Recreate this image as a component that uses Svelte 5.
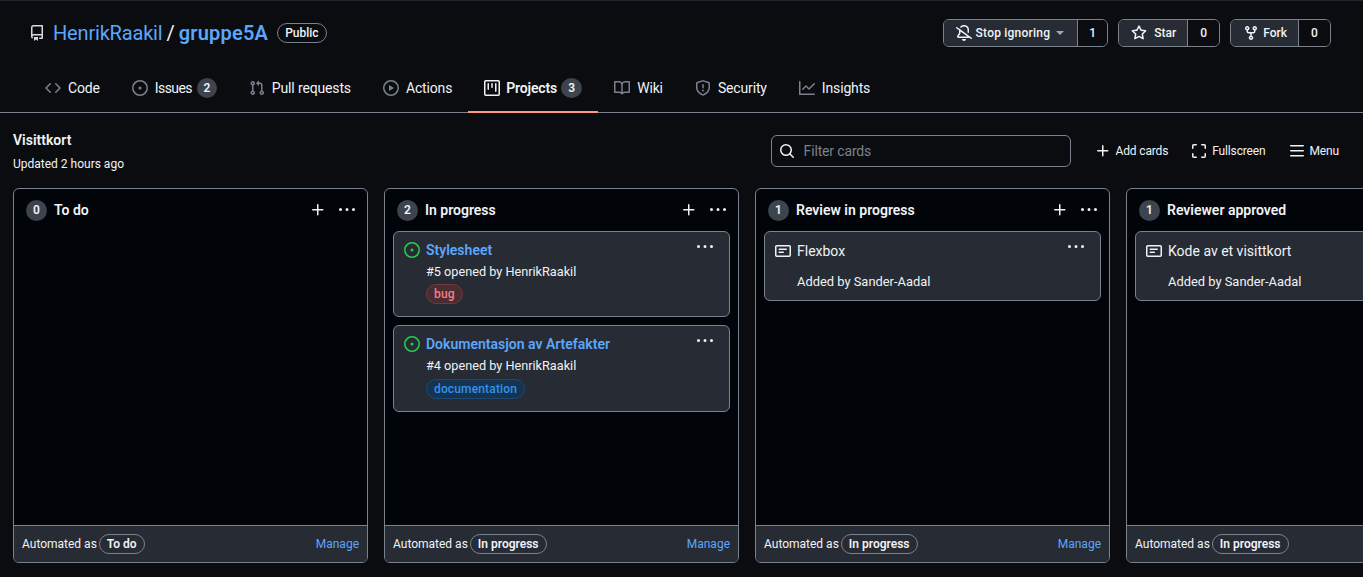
<script>
  const icons = {
    repo: 'M2 2.5A2.5 2.5 0 0 1 4.5 0h8.75a.75.75 0 0 1 .75.75v12.5a.75.75 0 0 1-.75.75h-2.5a.75.75 0 0 1 0-1.5h1.75v-2h-8a1 1 0 0 0-.714 1.7.75.75 0 1 1-1.072 1.05A2.495 2.495 0 0 1 2 11.5Zm10.5-1h-8a1 1 0 0 0-1 1v6.708A2.486 2.486 0 0 1 4.5 9h8ZM5 12.25a.25.25 0 0 1 .25-.25h3.5a.25.25 0 0 1 .25.25v3.25a.25.25 0 0 1-.4.2l-1.45-1.087a.249.249 0 0 0-.3 0L5.4 15.7a.25.25 0 0 1-.4-.2Z',
    code: 'm11.28 3.22 4.25 4.25a.75.75 0 0 1 0 1.06l-4.25 4.25a.749.749 0 0 1-1.275-.326.749.749 0 0 1 .215-.734L13.94 8l-3.72-3.72a.749.749 0 0 1 .326-1.275.749.749 0 0 1 .734.215Zm-6.56 0a.751.751 0 0 1 1.042.018.751.751 0 0 1 .018 1.042L2.06 8l3.72 3.72a.749.749 0 0 1-.326 1.275.749.749 0 0 1-.734-.215L.47 8.53a.75.75 0 0 1 0-1.06Z',
    issue: 'M8 9.5a1.5 1.5 0 1 0 0-3 1.5 1.5 0 0 0 0 3ZM8 0a8 8 0 1 1 0 16A8 8 0 0 1 8 0ZM1.5 8a6.5 6.5 0 1 0 13 0 6.5 6.5 0 0 0-13 0Z',
    pull: 'M1.5 3.25a2.25 2.25 0 1 1 3 2.122v5.256a2.251 2.251 0 1 1-1.5 0V5.372A2.25 2.25 0 0 1 1.5 3.25Zm5.677-.177L9.573.677A.25.25 0 0 1 10 .854V2.5h1A2.5 2.5 0 0 1 13.5 5v5.628a2.251 2.251 0 1 1-1.5 0V5a1 1 0 0 0-1-1h-1v1.646a.25.25 0 0 1-.427.177L7.177 3.427a.25.25 0 0 1 0-.354ZM3.75 2.5a.75.75 0 1 0 0 1.5.75.75 0 0 0 0-1.5Zm0 9.5a.75.75 0 1 0 0 1.5.75.75 0 0 0 0-1.5Zm8.25.75a.75.75 0 1 0 1.5 0 .75.75 0 0 0-1.5 0Z',
    play: 'M8 0a8 8 0 1 1 0 16A8 8 0 0 1 8 0ZM1.5 8a6.5 6.5 0 1 0 13 0 6.5 6.5 0 0 0-13 0Zm4.879-2.773 4.264 2.559a.25.25 0 0 1 0 .428l-4.264 2.559A.25.25 0 0 1 6 10.559V5.442a.25.25 0 0 1 .379-.215Z',
    project: 'M1.75 0h12.5C15.216 0 16 .784 16 1.75v12.5A1.75 1.75 0 0 1 14.25 16H1.75A1.75 1.75 0 0 1 0 14.25V1.75C0 .784.784 0 1.75 0ZM1.5 1.75v12.5c0 .138.112.25.25.25h12.5a.25.25 0 0 0 .25-.25V1.75a.25.25 0 0 0-.25-.25H1.75a.25.25 0 0 0-.25.25ZM11.75 3a.75.75 0 0 1 .75.75v7.5a.75.75 0 0 1-1.5 0v-7.5a.75.75 0 0 1 .75-.75Zm-8.25.75a.75.75 0 0 1 1.5 0v5.5a.75.75 0 0 1-1.5 0ZM8 3a.75.75 0 0 1 .75.75v3.5a.75.75 0 0 1-1.5 0v-3.5A.75.75 0 0 1 8 3Z',
    book: 'M0 1.75A.75.75 0 0 1 .75 1h4.253c1.227 0 2.317.59 3 1.501A3.743 3.743 0 0 1 11.006 1h4.245a.75.75 0 0 1 .75.75v10.5a.75.75 0 0 1-.75.75h-4.507a2.25 2.25 0 0 0-1.591.659l-.622.621a.75.75 0 0 1-1.06 0l-.622-.621A2.25 2.25 0 0 0 5.258 13H.75a.75.75 0 0 1-.75-.75Zm7.251 10.324.004-5.073-.002-2.253A2.25 2.25 0 0 0 5.003 2.5H1.5v9h3.757a3.75 3.75 0 0 1 1.994.574ZM8.755 4.75l-.004 7.322a3.752 3.752 0 0 1 1.992-.572H14.5v-9h-3.495a2.25 2.25 0 0 0-2.25 2.25Z',
    shield: 'M7.467.133a1.748 1.748 0 0 1 1.066 0l5.25 1.68A1.75 1.75 0 0 1 15 3.48V7c0 1.566-.32 3.182-1.303 4.682-.983 1.498-2.585 2.813-5.032 3.855a1.697 1.697 0 0 1-1.33 0c-2.447-1.042-4.049-2.357-5.032-3.855C1.32 10.182 1 8.566 1 7V3.48a1.75 1.75 0 0 1 1.217-1.667Zm.61 1.429a.25.25 0 0 0-.153 0l-5.25 1.68a.25.25 0 0 0-.174.238V7c0 1.358.275 2.666 1.057 3.86.784 1.194 2.121 2.34 4.366 3.297a.196.196 0 0 0 .154 0c2.245-.956 3.582-2.104 4.366-3.298C13.225 9.666 13.5 8.36 13.5 7V3.48a.251.251 0 0 0-.174-.237l-5.25-1.68ZM8.75 4.75v3a.75.75 0 0 1-1.5 0v-3a.75.75 0 0 1 1.5 0ZM9 10.5a1 1 0 1 1-2 0 1 1 0 0 1 2 0Z',
    graph: 'M1.5 1.75V13.5h13.75a.75.75 0 0 1 0 1.5H.75a.75.75 0 0 1-.75-.75V1.75a.75.75 0 0 1 1.5 0Zm14.28 2.53-5.25 5.25a.75.75 0 0 1-1.06 0L7 7.06 4.28 9.78a.751.751 0 0 1-1.042-.018.751.751 0 0 1-.018-1.042l3.25-3.25a.75.75 0 0 1 1.06 0L10 7.94l4.72-4.72a.751.751 0 0 1 1.042.018.751.751 0 0 1 .018 1.042Z',
    bellSlash: 'm4.182 4.31.016.011 10.104 7.316.013.01 1.375.996a.75.75 0 1 1-.88 1.214L13.626 13H2.518a1.516 1.516 0 0 1-1.263-2.36l1.703-2.554A.255.255 0 0 0 3 7.947V5.305L.31 3.357a.75.75 0 1 1 .88-1.214Zm7.373 7.19L4.5 6.391v1.556c0 .346-.102.683-.294.97l-1.703 2.556a.017.017 0 0 0-.003.01c0 .005.002.009.005.012l.006.004.007.001ZM8 1.5c-.997 0-1.895.416-2.534 1.086A.75.75 0 1 1 4.38 1.55 5 5 0 0 1 13 5v2.373a.75.75 0 0 1-1.5 0V5A3.5 3.5 0 0 0 8 1.5ZM8 16a2 2 0 0 1-1.985-1.75c-.017-.137.097-.25.235-.25h3.5c.138 0 .252.113.235.25A2 2 0 0 1 8 16Z',
    star: 'M8 .25a.75.75 0 0 1 .673.418l1.882 3.815 4.21.612a.75.75 0 0 1 .416 1.279l-3.046 2.97.719 4.192a.751.751 0 0 1-1.088.791L8 12.347l-3.766 1.98a.75.75 0 0 1-1.088-.79l.72-4.194L.818 6.374a.75.75 0 0 1 .416-1.28l4.21-.611L7.327.668A.75.75 0 0 1 8 .25Zm0 2.445L6.615 5.5a.75.75 0 0 1-.564.41l-3.097.45 2.24 2.184a.75.75 0 0 1 .216.664l-.528 3.084 2.769-1.456a.75.75 0 0 1 .698 0l2.77 1.456-.53-3.084a.75.75 0 0 1 .216-.664l2.24-2.183-3.096-.45a.75.75 0 0 1-.564-.41L8 2.694Z',
    fork: 'M5 5.372v.878c0 .414.336.75.75.75h4.5a.75.75 0 0 0 .75-.75v-.878a2.25 2.25 0 1 1 1.5 0v.878a2.25 2.25 0 0 1-2.25 2.25h-1.5v2.128a2.251 2.251 0 1 1-1.5 0V8.5h-1.5A2.25 2.25 0 0 1 3.5 6.25v-.878a2.25 2.25 0 1 1 1.5 0ZM5 3.25a.75.75 0 1 0-1.5 0 .75.75 0 0 0 1.5 0Zm6.75.75a.75.75 0 1 0 0-1.5.75.75 0 0 0 0 1.5Zm-3 8.75a.75.75 0 1 0-1.5 0 .75.75 0 0 0 1.5 0Z',
    search: 'M10.68 11.74a6 6 0 0 1-7.922-8.982 6 6 0 0 1 8.982 7.922l3.04 3.04a.749.749 0 0 1-.326 1.275.749.749 0 0 1-.734-.215ZM11.5 7a4.499 4.499 0 1 0-8.997 0A4.499 4.499 0 0 0 11.5 7Z',
    plus: 'M7.75 2a.75.75 0 0 1 .75.75V7h4.25a.75.75 0 0 1 0 1.5H8.5v4.25a.75.75 0 0 1-1.5 0V8.5H2.75a.75.75 0 0 1 0-1.5H7V2.75A.75.75 0 0 1 7.75 2Z',
    full: 'M1.75 10a.75.75 0 0 1 .75.75v2.5c0 .138.112.25.25.25h2.5a.75.75 0 0 1 0 1.5h-2.5A1.75 1.75 0 0 1 1 13.25v-2.5a.75.75 0 0 1 .75-.75Zm12.5 0a.75.75 0 0 1 .75.75v2.5A1.75 1.75 0 0 1 13.25 15h-2.5a.75.75 0 0 1 0-1.5h2.5a.25.25 0 0 0 .25-.25v-2.5a.75.75 0 0 1 .75-.75ZM2.75 2.5a.25.25 0 0 0-.25.25v2.5a.75.75 0 0 1-1.5 0v-2.5C1 1.784 1.784 1 2.75 1h2.5a.75.75 0 0 1 0 1.5ZM10 1.75a.75.75 0 0 1 .75-.75h2.5c.966 0 1.75.784 1.75 1.75v2.5a.75.75 0 0 1-1.5 0v-2.5a.25.25 0 0 0-.25-.25h-2.5a.75.75 0 0 1-.75-.75Z',
    bars: 'M1 2.75A.75.75 0 0 1 1.75 2h12.5a.75.75 0 0 1 0 1.5H1.75A.75.75 0 0 1 1 2.75Zm0 5A.75.75 0 0 1 1.75 7h12.5a.75.75 0 0 1 0 1.5H1.75A.75.75 0 0 1 1 7.75ZM1.75 12h12.5a.75.75 0 0 1 0 1.5H1.75a.75.75 0 0 1 0-1.5Z',
    kebab: 'M8 9a1.5 1.5 0 1 0 0-3 1.5 1.5 0 0 0 0 3ZM1.5 9a1.5 1.5 0 1 0 0-3 1.5 1.5 0 0 0 0 3Zm13 0a1.5 1.5 0 1 0 0-3 1.5 1.5 0 0 0 0 3Z',
    note: 'M0 3.75C0 2.784.784 2 1.75 2h12.5c.966 0 1.75.784 1.75 1.75v8.5A1.75 1.75 0 0 1 14.25 14H1.75A1.75 1.75 0 0 1 0 12.25Zm1.75-.25a.25.25 0 0 0-.25.25v8.5c0 .138.112.25.25.25h12.5a.25.25 0 0 0 .25-.25v-8.5a.25.25 0 0 0-.25-.25ZM3.5 6.25a.75.75 0 0 1 .75-.75h7a.75.75 0 0 1 0 1.5h-7a.75.75 0 0 1-.75-.75Zm.75 2.25h4a.75.75 0 0 1 0 1.5h-4a.75.75 0 0 1 0-1.5Z'
  };

  const tabs = [
    { label: 'Code', icon: 'code' },
    { label: 'Issues', icon: 'issue', count: 2, tight: true },
    { label: 'Pull requests', icon: 'pull' },
    { label: 'Actions', icon: 'play' },
    { label: 'Projects', icon: 'project', count: 3, active: true },
    { label: 'Wiki', icon: 'book' },
    { label: 'Security', icon: 'shield' },
    { label: 'Insights', icon: 'graph' }
  ];

  const columns = [
    { title: 'To do', automated: 'To do', cards: [] },
    {
      title: 'In progress',
      automated: 'In progress',
      cards: [
        { type: 'issue', title: 'Stylesheet', meta: '#5 opened by HenrikRaakil', label: 'bug', tone: 'red' },
        { type: 'issue', title: 'Dokumentasjon av Artefakter', meta: '#4 opened by HenrikRaakil', label: 'documentation', tone: 'blue' }
      ]
    },
    {
      title: 'Review in progress',
      automated: 'In progress',
      cards: [{ type: 'note', title: 'Flexbox', meta: 'Added by Sander-Aadal' }]
    },
    {
      title: 'Reviewer approved',
      automated: 'In progress',
      cards: [{ type: 'note', title: 'Kode av et visittkort', meta: 'Added by Sander-Aadal' }]
    }
  ];
</script>

{#snippet icon(name, size = 16)}
  <svg class="icon" width={size} height={size} viewBox="0 0 16 16" fill="currentColor" aria-hidden="true">
    <path d={icons[name]} />
  </svg>
{/snippet}

<div class="page">
  <header class="repo-head">
    <div class="repo-title">
      <span class="repo-icon">{@render icon('repo')}</span>
      <a href="#owner" class="owner">HenrikRaakil</a>
      <span class="slash">/</span>
      <a href="#repo" class="name">gruppe5A</a>
      <span class="visibility">Public</span>
    </div>
    <div class="repo-actions">
      <div class="btn-group watch">
        <button class="btn">{@render icon('bellSlash')}<span>Stop ignoring</span><i class="caret"></i></button>
        <span class="btn-count">1</span>
      </div>
      <div class="btn-group">
        <button class="btn">{@render icon('star')}<span class="wide">Star</span></button>
        <span class="btn-count">0</span>
      </div>
      <div class="btn-group">
        <button class="btn">{@render icon('fork')}<span>Fork</span></button>
        <span class="btn-count">0</span>
      </div>
    </div>
  </header>

  <nav class="tabs">
    {#each tabs as tab}
      <a href="#tab" class="tab" class:active={tab.active} class:tight={tab.tight}>
        {@render icon(tab.icon)}
        <span class="tab-label">{tab.label}</span>
        {#if tab.count}<span class="counter">{tab.count}</span>{/if}
      </a>
    {/each}
  </nav>

  <section class="project-bar">
    <div>
      <h1>Visittkort</h1>
      <p>Updated 2 hours ago</p>
    </div>
    <div class="project-tools">
      <label class="filter">
        {@render icon('search')}
        <input placeholder="Filter cards" />
      </label>
      <button class="tool">{@render icon('plus')}Add cards</button>
      <button class="tool">{@render icon('full')}Fullscreen</button>
      <button class="tool">{@render icon('bars')}Menu</button>
    </div>
  </section>

  <main class="board">
    {#each columns as column}
      <section class="column">
        <div class="column-head">
          <span class="counter">{column.cards.length}</span>
          <h2>{column.title}</h2>
          <span class="column-actions">
            {@render icon('plus')}
            {@render icon('kebab')}
          </span>
        </div>
        <div class="cards">
          {#each column.cards as card}
            <article class="card" class:note={card.type === 'note'}>
              <span class="card-menu">{@render icon('kebab')}</span>
              {#if card.type === 'issue'}
                <div class="card-title">
                  <span class="open">{@render icon('issue')}</span>
                  <a href="#issue">{card.title}</a>
                </div>
                <p class="meta">{card.meta}</p>
                <span class="label {card.tone}">{card.label}</span>
              {:else}
                <div class="note-title">
                  {@render icon('note')}
                  <span>{card.title}</span>
                </div>
                <p class="meta">{card.meta}</p>
              {/if}
            </article>
          {/each}
        </div>
        <footer class="column-foot">
          <span>Automated as</span>
          <span class="pill">{column.automated}</span>
          <a href="#manage">Manage</a>
        </footer>
      </section>
    {/each}
  </main>
</div>

<style>
  :global(body) {
    margin: 0;
    background: #0a0c10;
  }

  .page {
    height: 577px;
    overflow: hidden;
    box-sizing: border-box;
    border-top: 1px solid #21262d;
    background: #0a0c10;
    color: #f0f3f6;
    font-family: Roboto, "Liberation Sans", sans-serif;
    font-size: 14px;
  }

  a {
    text-decoration: none;
    color: #5ca6fb;
  }

  h1,
  h2,
  p {
    margin: 0;
  }

  button {
    font: inherit;
    color: inherit;
    background: none;
    border: 0;
    padding: 0;
  }

  .icon {
    display: block;
    flex: none;
  }

  .repo-head {
    display: flex;
    align-items: center;
    justify-content: space-between;
    height: 64px;
    padding: 0 32px 0 29px;
    box-sizing: border-box;
  }

  .repo-title {
    display: flex;
    align-items: center;
    font-size: 20px;
  }

  .repo-icon {
    color: #d5dae0;
    margin-right: 8px;
  }

  .owner {
    letter-spacing: -0.18px;
  }

  .slash {
    margin: 0 4px;
  }

  .name {
    font-weight: 600;
    letter-spacing: 0.2px;
  }

  .visibility {
    margin-left: 9px;
    padding: 0 7px;
    border: 1px solid #7a828e;
    border-radius: 10px;
    font-size: 12px;
    font-weight: 500;
    line-height: 18px;
  }

  .repo-actions {
    display: flex;
    gap: 10px;
  }

  .btn-group {
    display: flex;
    height: 28px;
    box-sizing: border-box;
    border: 1px solid #7a828e;
    border-radius: 6px;
    font-size: 12px;
    font-weight: 500;
    overflow: hidden;
  }

  .btn {
    display: flex;
    align-items: center;
    gap: 4px;
    padding: 0 11px 0 12px;
    background: #272b33;
  }

  .btn .wide {
    margin-left: 3px;
  }

  .watch .btn {
    padding-right: 13px;
    letter-spacing: 0.22px;
  }

  .caret {
    margin-left: 2px;
    border: 4px solid transparent;
    border-top-color: #9ea7b3;
    border-bottom: 0;
  }

  .btn-count {
    display: flex;
    align-items: center;
    justify-content: center;
    width: 31px;
    border-left: 1px solid #7a828e;
    background: #0a0c10;
  }

  .watch .btn-count {
    width: 29px;
  }

  .tabs {
    display: flex;
    height: 48px;
    padding: 0 0 2px 29px;
    box-sizing: border-box;
    border-bottom: 1px solid #7a828e;
    letter-spacing: -0.15px;
  }

  .tab {
    display: flex;
    align-items: center;
    gap: 7px;
    padding: 0 16px;
    color: #f0f3f6;
    position: relative;
  }

  .tab.tight .tab-label {
    letter-spacing: -0.6px;
  }

  .tab .counter {
    margin-left: -2px;
    padding: 0;
    letter-spacing: 0;
  }

  .tab .icon {
    color: #7a828e;
  }

  .tab.active {
    gap: 6px;
    font-weight: 600;
  }

  .tab.active .counter {
    min-width: 21px;
  }

  .tab.active::after {
    content: '';
    position: absolute;
    left: 0;
    right: 0;
    bottom: -3px;
    height: 2px;
    background: #ff967d;
  }

  .tab.active .icon {
    color: #f0f3f6;
  }

  .counter {
    display: inline-flex;
    align-items: center;
    justify-content: center;
    min-width: 20px;
    height: 20px;
    padding: 0 1px;
    border-radius: 50%;
    background: #3e444d;
    font-size: 12px;
    font-weight: 600;
  }

  .project-bar {
    display: flex;
    justify-content: space-between;
    align-items: flex-start;
    height: 75px;
    padding: 0 24px 0 13px;
    box-sizing: border-box;
  }

  .project-bar > div:first-child {
    padding-top: 17px;
  }

  .project-bar h1 {
    font-size: 14px;
    font-weight: 600;
    line-height: 20px;
  }

  .project-bar p {
    margin-top: 6px;
    font-size: 12px;
    line-height: 16px;
  }

  .project-tools {
    display: flex;
    align-items: center;
    gap: 23px;
    padding-top: 22px;
  }

  .filter {
    display: flex;
    align-items: center;
    gap: 9px;
    width: 300px;
    height: 32px;
    margin-right: 1px;
    padding: 0 8px 0 7px;
    box-sizing: border-box;
    border: 1px solid #7a828e;
    border-radius: 6px;
  }

  .filter input {
    flex: 1;
    min-width: 0;
    border: 0;
    outline: 0;
    background: none;
    color: inherit;
    font: inherit;
    letter-spacing: -0.15px;
    padding: 0;
  }

  .filter input::placeholder {
    color: #7a828e;
  }

  .tool {
    display: flex;
    align-items: center;
    gap: 5px;
    font-size: 12px;
    letter-spacing: -0.15px;
  }

  .board {
    display: flex;
    gap: 16px;
    padding-left: 13px;
    height: 375px;
  }

  .column {
    display: flex;
    flex-direction: column;
    flex: none;
    width: 355px;
    box-sizing: border-box;
    border: 1px solid #7a828e;
    border-radius: 6px;
    background: #010409;
    overflow: hidden;
  }

  .column-head {
    display: flex;
    align-items: center;
    height: 42px;
    padding: 0 12px;
  }

  .column-head .counter {
    min-width: 21px;
    height: 21px;
    padding: 0;
  }

  .column-head h2 {
    margin-left: 7px;
    font-size: 14px;
    font-weight: 600;
  }

  .column-actions {
    display: flex;
    gap: 13px;
    margin-left: auto;
  }

  .cards {
    flex: 1;
    display: flex;
    flex-direction: column;
    gap: 8px;
    padding: 0 8px;
  }

  .card {
    position: relative;
    box-sizing: border-box;
    height: 86px;
    padding: 8px 10px;
    border: 1px solid #7a828e;
    border-radius: 6px;
    background: #272b33;
  }

  .card + .card {
    height: 87px;
  }

  .card.note {
    height: 70px;
  }

  .card-menu {
    position: absolute;
    top: 7px;
    right: 16px;
  }

  .card-title {
    display: flex;
    align-items: center;
    gap: 6px;
    line-height: 20px;
    font-weight: 600;
  }

  .open {
    color: #26cd4d;
  }

  .meta {
    margin: 3px 0 0 22px;
    font-size: 12.7px;
    line-height: 18px;
  }

  .label {
    display: inline-block;
    margin: 3px 0 0 22px;
    padding: 0 7px;
    border: 1px solid;
    border-radius: 10px;
    font-size: 12px;
    font-weight: 500;
    letter-spacing: 0.15px;
    line-height: 18px;
  }

  .card + .card .label {
    margin-top: 4px;
  }

  .label.red {
    color: #f47f89;
    background: #4a2c33;
    border-color: #6f3a42;
  }

  .label.blue {
    color: #2f93ee;
    background: #163352;
    border-color: #1d4a74;
  }

  .note-title {
    display: flex;
    align-items: center;
    gap: 6px;
    margin-top: 1px;
    line-height: 20px;
  }

  .note .meta {
    margin-top: 12px;
    font-size: 12.9px;
  }

  .column-foot {
    display: flex;
    align-items: center;
    flex: none;
    gap: 2px;
    height: 37px;
    padding: 0 8px;
    box-sizing: border-box;
    border-top: 1px solid #7a828e;
    background: #272b33;
    font-size: 12px;
  }

  .pill {
    padding: 0 7px;
    border: 1px solid #7a828e;
    border-radius: 10px;
    font-weight: 600;
    line-height: 18px;
  }

  .column-foot a {
    margin-left: auto;
  }
</style>
